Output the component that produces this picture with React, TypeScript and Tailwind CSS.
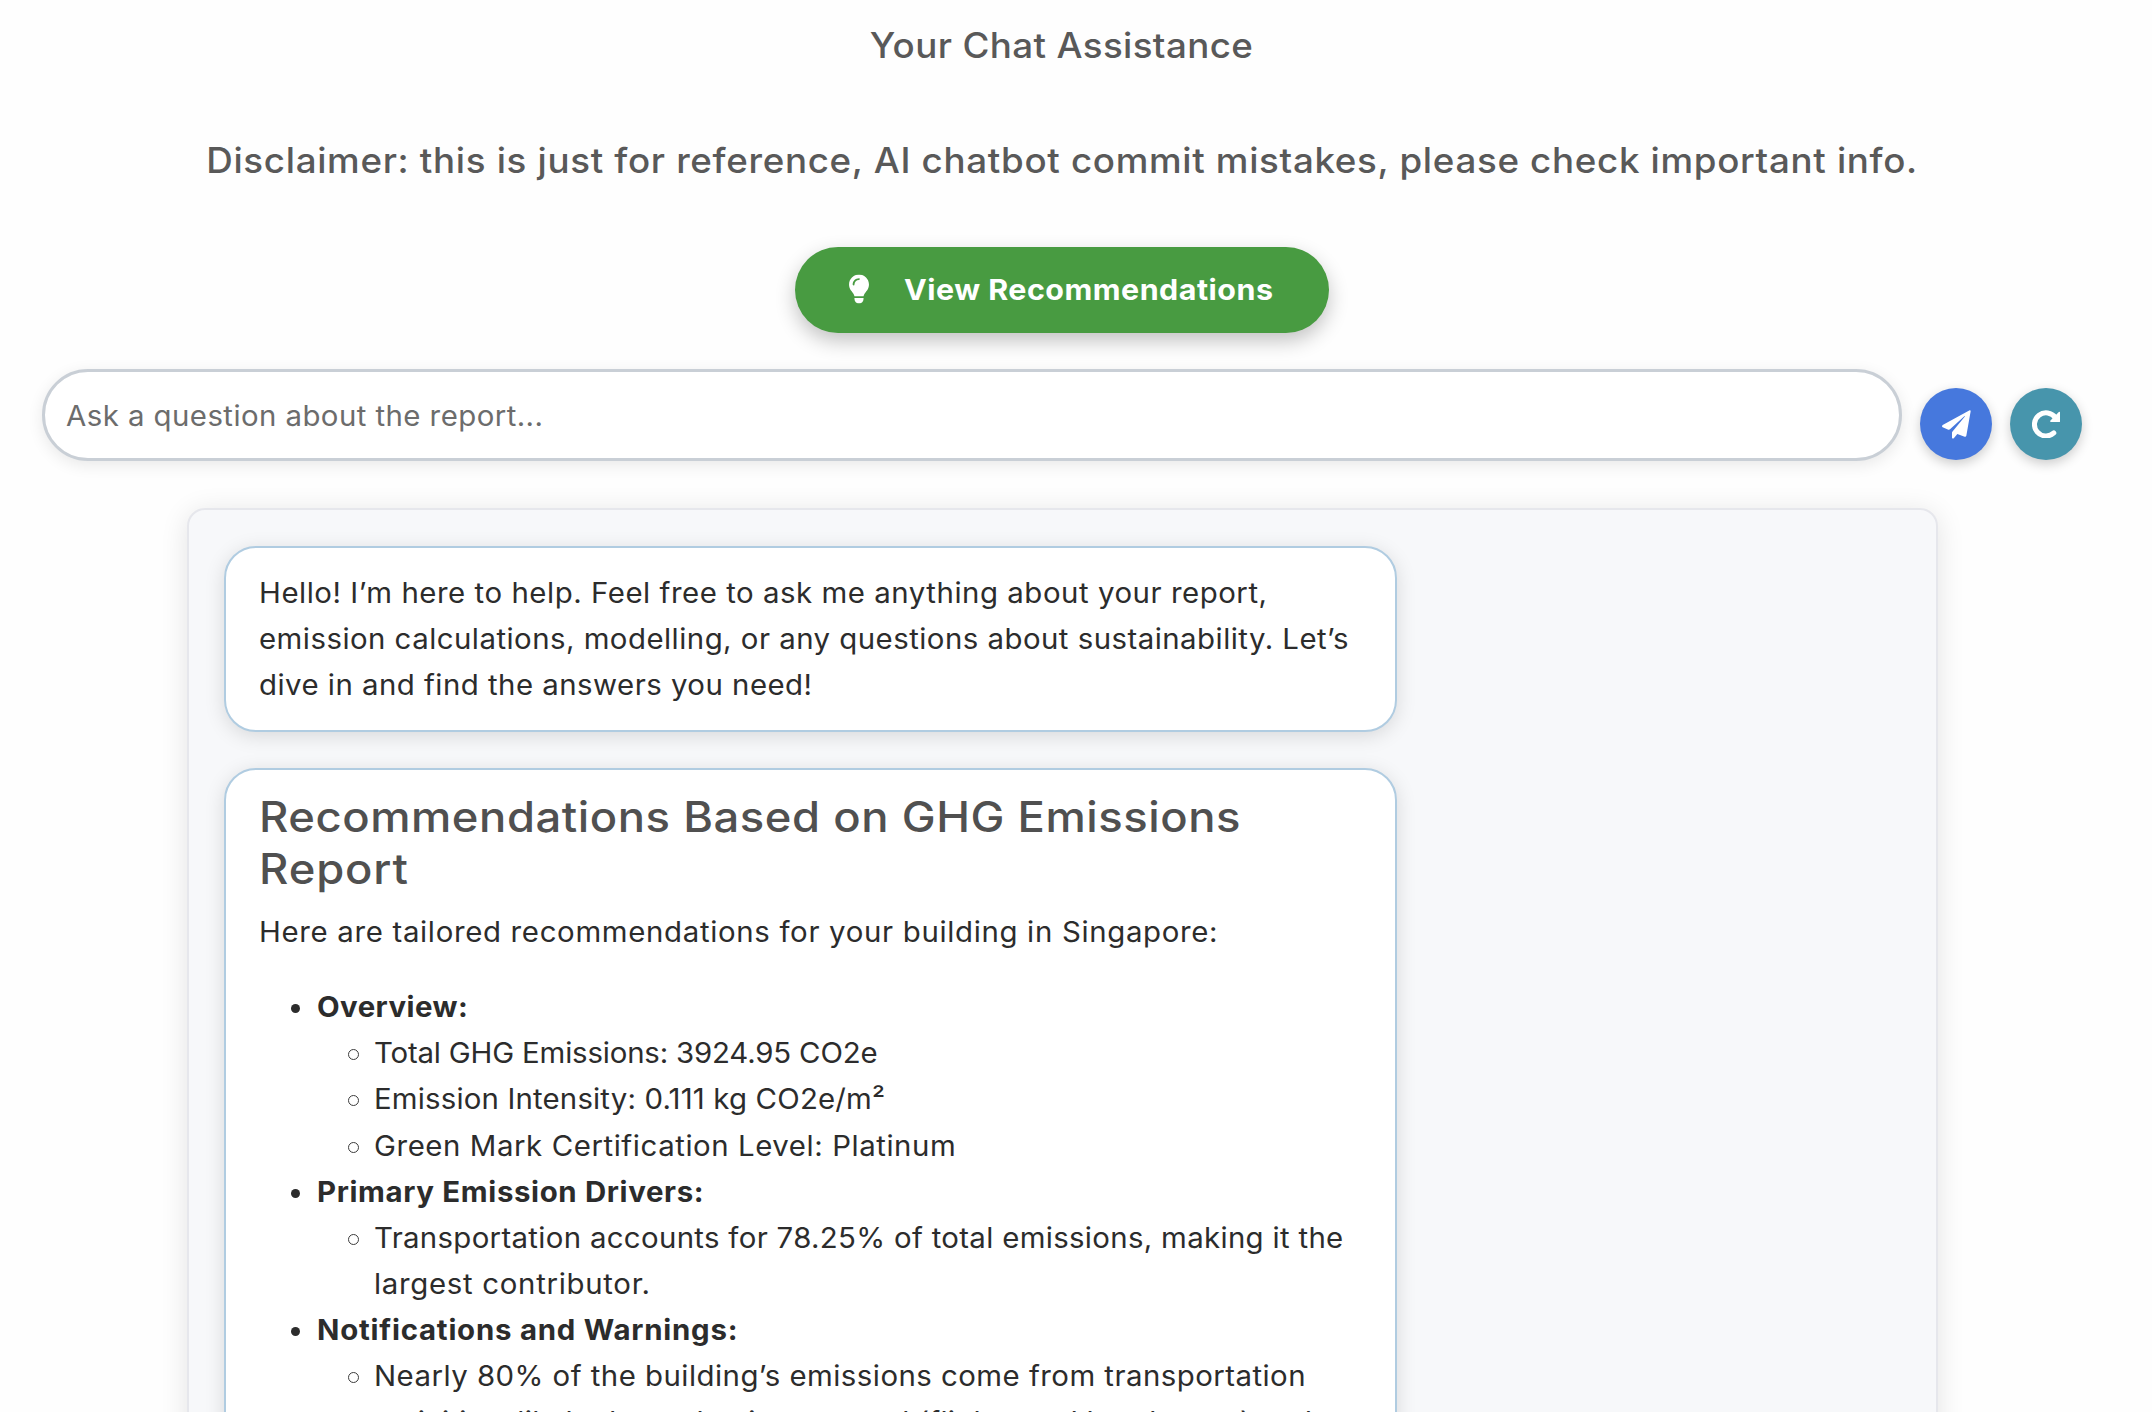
import type { ReactNode } from "react";
import { FaLightbulb } from "react-icons/fa6";

function PlaneIcon() {
  return (
    <svg viewBox="96 87 87 87" className="size-[29px]" fill="currentColor">
      <path d="M179 88 L98 132 Q94 136 98 139 L115 146 Q118 147 120 145 L163 106 Q166 104 164 107 L127 152 Q126 153 126 155 V170 Q128 175 132 171 L142 159 L164 167 Q168 168 169 164 L182 91 Q182 87 179 88 Z" />
    </svg>
  );
}

function RedoIcon() {
  return (
    <svg viewBox="366 87 85 85" className="size-[28.5px]">
      <path d="M436 110 A34.5 34.5 0 1 0 431 155.500" fill="none" stroke="currentColor" strokeWidth="15" strokeLinecap="round" />
      <path d="M450 95 V120 Q450 123 447 123 H423 Q418 122 421 118 L446 93 Q450 91 450 95 Z" fill="currentColor" />
    </svg>
  );
}

function Bubble({ className, children }: { className: string; children: ReactNode }) {
  return (
    <div
      className={`w-[1173px] rounded-[32px] border-2 border-[#b0cce1] bg-white px-[33px] text-[28px] leading-[46.08px] text-[#2c2c2c] shadow-[0_4px_20px_rgba(0,0,0,0.13)] ${className}`}
    >
      {children}
    </div>
  );
}

function Line({ className, children }: { className: string; children: ReactNode }) {
  return <span className={`block origin-left whitespace-nowrap ${className}`}>{children}</span>;
}

function Topic({ title, tracking, children }: { title: string; tracking: string; children: ReactNode }) {
  return (
    <li>
      <div className="flex items-start">
        <span className="mt-[20px] mr-[17px] ml-[32px] size-[9px] shrink-0 rounded-full bg-[#2c2c2c]" />
        <strong className={`origin-left scale-x-105 font-bold whitespace-nowrap ${tracking}`}>{title}</strong>
      </div>
      <ul>{children}</ul>
    </li>
  );
}

function Detail({ children }: { children: ReactNode }) {
  return (
    <li className="flex items-start">
      <span className="mt-[19px] mr-[15px] ml-[89px] size-[11px] shrink-0 rounded-full border-[1.5px] border-[#3c3c3c]" />
      <div>{children}</div>
    </li>
  );
}

export default function App() {
  return (
    <div className="flex h-[1412px] w-[2152px] flex-col overflow-hidden bg-[#fefefe] font-['Inter',sans-serif]">
      <header className="flex w-[2124px] flex-col items-center text-[35px] leading-[44px] font-medium text-[#595959]">
        <h1 className="mt-[23px] scale-x-105 tracking-[0.35px] whitespace-nowrap">Your Chat Assistance</h1>
        <h2 className="mt-[71px] scale-x-105 tracking-[0.637px] whitespace-nowrap">
          Disclaimer: this is just for reference, AI chatbot commit mistakes, please check important info.
        </h2>
        <button className="mt-[65px] flex h-[86px] w-[534px] items-center rounded-full bg-[#489b41] pl-[53px] text-[29px] font-bold text-white shadow-[0_8px_20px_rgba(0,0,0,0.24)]">
          <FaLightbulb className="mr-[34px] h-[29px] w-[22px] -translate-y-[1.5px]" />
          <span className="origin-left scale-x-105 tracking-[0.46px] whitespace-nowrap">View Recommendations</span>
        </button>
      </header>

      <form className="mt-[36px] ml-[42px] flex h-[92px] items-end">
        <div
          role="textbox"
          className="flex h-[92px] w-[1860px] items-center rounded-full border-[3px] border-[#c9cfd6] bg-white pt-[2px] pl-[21px] text-[28px] text-[#6c6c6c] shadow-[0_4px_16px_rgba(0,0,0,0.09)]"
        >
          <span className="origin-left scale-x-105 tracking-[0.41px] whitespace-nowrap">Ask a question about the report...</span>
        </div>
        <button
          type="button"
          className="mb-px ml-[18px] flex size-[72px] items-center justify-center rounded-full bg-[#4678dd] text-white shadow-[0_4px_12px_rgba(0,0,0,0.2)]"
        >
          <PlaneIcon />
        </button>
        <button
          type="button"
          className="mb-px ml-[18px] flex size-[72px] items-center justify-center rounded-full bg-[#4795ac] text-white shadow-[0_4px_12px_rgba(0,0,0,0.2)]"
        >
          <RedoIcon />
        </button>
      </form>

      <main className="mt-[47px] ml-[187px] flex h-[1200px] w-[1751px] shrink-0 flex-col gap-[36px] rounded-[18px] border-2 border-[#e6e7ec] bg-[#f7f8fa] px-[35px] pt-[36px] shadow-[0_4px_28px_rgba(0,0,0,0.11)]">
        <Bubble className="h-[186px] shrink-0 pt-[22px]">
          <p>
            <Line className="w-fit scale-x-105 tracking-[0.507px]">Hello! I’m here to help. Feel free to ask me anything about your report,</Line>
            <Line className="w-fit scale-x-105 tracking-[0.443px]">emission calculations, modelling, or any questions about sustainability. Let’s</Line>
            <Line className="w-fit scale-x-105 tracking-[0.446px]">dive in and find the answers you need!</Line>
          </p>
        </Bubble>

        <Bubble className="h-[1000px] shrink-0 pt-[21px]">
          <h3 className="text-[42px] leading-[51.84px] font-medium text-[#505050]">
            <Line className="w-fit scale-x-[1.08] tracking-[0.51px]">Recommendations Based on GHG Emissions</Line>
            <Line className="w-fit scale-x-[1.08] tracking-[0.8px]">Report</Line>
          </h3>
          <p className="mt-[14.5px] mb-[29px]">
            <Line className="w-fit scale-x-105 tracking-[0.634px]">Here are tailored recommendations for your building in Singapore:</Line>
          </p>
          <ul>
            <Topic title="Overview:" tracking="tracking-[0.43px]">
              <Detail>
                <Line className="w-fit scale-x-105 tracking-[-0.175px]">Total GHG Emissions: 3924.95 CO2e</Line>
              </Detail>
              <Detail>
                <Line className="w-fit scale-x-105 tracking-[0.157px]">Emission Intensity: 0.111 kg CO2e/m²</Line>
              </Detail>
              <Detail>
                <Line className="w-fit scale-x-105 tracking-[0.538px]">Green Mark Certification Level: Platinum</Line>
              </Detail>
            </Topic>
            <Topic title="Primary Emission Drivers:" tracking="tracking-[0.608px]">
              <Detail>
                <Line className="w-fit scale-x-105 tracking-[0.3px]">Transportation accounts for 78.25% of total emissions, making it the</Line>
                <Line className="w-fit scale-x-105 tracking-[0.658px]">largest contributor.</Line>
              </Detail>
            </Topic>
            <Topic title="Notifications and Warnings:" tracking="tracking-[0.727px]">
              <Detail>
                <Line className="w-fit scale-x-105 tracking-[0.439px]">Nearly 80% of the building’s emissions come from transportation</Line>
                <Line className="w-fit scale-x-105 tracking-[0.28px]">activities, likely due to business travel (flights and hotel stays) and</Line>
              </Detail>
            </Topic>
          </ul>
        </Bubble>
      </main>
    </div>
  );
}
